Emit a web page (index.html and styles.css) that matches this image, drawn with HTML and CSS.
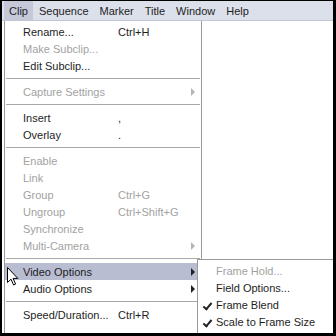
FILE: index.html
```
<!DOCTYPE html>
<html lang="en">

<head>
  <meta charset="UTF-8">
  <title>Clip menu</title>
  <link rel="stylesheet" href="styles.css">
</head>

<body>

  <div class="screen">
    <div class="menubar">
      <span class="bar-item active">Clip</span>
      <span class="bar-item">Sequence</span>
      <span class="bar-item">Marker</span>
      <span class="bar-item">Title</span>
      <span class="bar-item">Window</span>
      <span class="bar-item">Help</span>
    </div>

    <div class="menu">
      <div class="row"><span>Rename...</span><span>Ctrl+H</span></div>
      <div class="row off"><span>Make Subclip...</span></div>
      <div class="row"><span>Edit Subclip...</span></div>
      <div class="sep"></div>
      <div class="row off"><span>Capture Settings</span><span></span><i class="arrow"></i></div>
      <div class="sep"></div>
      <div class="row"><span>Insert</span><span>,</span></div>
      <div class="row"><span>Overlay</span><span>.</span></div>
      <div class="sep"></div>
      <div class="row off"><span>Enable</span></div>
      <div class="row off"><span>Link</span></div>
      <div class="row off"><span>Group</span><span>Ctrl+G</span></div>
      <div class="row off"><span>Ungroup</span><span>Ctrl+Shift+G</span></div>
      <div class="row off"><span>Synchronize</span></div>
      <div class="row off"><span>Multi-Camera</span><span></span><i class="arrow"></i></div>
      <div class="sep"></div>
      <div class="row hover"><span>Video Options</span><span></span><i class="arrow"></i></div>
      <div class="row"><span>Audio Options</span><span></span><i class="arrow"></i></div>
      <div class="sep"></div>
      <div class="row"><span>Speed/Duration...</span><span>Ctrl+R</span></div>
    </div>

    <div class="submenu">
      <div class="sub-row off">Frame Hold...</div>
      <div class="sub-row">Field Options...</div>
      <div class="sub-row checked">Frame Blend</div>
      <div class="sub-row checked">Scale to Frame Size</div>
    </div>

    <svg class="cursor" width="12" height="19" viewBox="0 0 12 19">
      <path d="M0.5 0.5 L0.5 15.5 L4 12.2 L6.6 18 L8.6 17.1 L6.1 11.4 L10.8 11.4 Z" fill="#fff" stroke="#000" stroke-width="1" stroke-linejoin="miter"/>
    </svg>
  </div>

</body>

</html>
```
FILE: styles.css
```
body {
  margin: 0;
  background-color: #fff;
  font-family: "Liberation Sans", Arial, sans-serif;
  font-size: 11px;
  color: #1e1e1e;
}

.screen {
  position: relative;
  width: 336px;
  height: 336px;
  box-sizing: border-box;
  border-style: solid;
  border-color: #000;
  border-width: 1px 3px 3px 2px;
  overflow: hidden;
  background-color: #fff;
}

.menubar {
  display: flex;
  height: 19px;
  padding-left: 2px;
  background-color: #dce0ea;
  border-bottom: 1px solid #c2c6d0;
}

.bar-item {
  display: flex;
  align-items: center;
  padding: 0 5px;
  margin-right: 1px;
  font-size: 11px;
}

.bar-item.active {
  background-color: #c4c8d9;
}

.menu {
  width: 196px;
  height: 320px;
  margin-left: 2px;
  padding-top: 2px;
  border-left: 1px solid #9a9a9a;
  border-right: 1px solid #9a9a9a;
  background-color: #fff;
}

.row {
  display: grid;
  grid-template-columns: 95px 1fr 10px;
  align-items: center;
  height: 17px;
  padding-left: 18px;
}

.row.off {
  color: #a2a2a2;
}

.row.hover {
  background-color: #b9bdd2;
}

.sep {
  height: 9px;
  display: flex;
  align-items: center;
  padding: 0 1px;
}

.sep::before {
  content: "";
  flex: 1;
  border-top: 1px solid #a8a8a8;
}

.arrow {
  width: 0;
  height: 0;
  border-top: 4px solid transparent;
  border-bottom: 4px solid transparent;
  border-left: 4px solid #222;
}

.row.off .arrow {
  border-left-color: #b4b4b4;
}

.submenu {
  position: absolute;
  left: 195px;
  top: 258px;
  right: 0;
  height: 80px;
  padding-top: 3px;
  border-left: 1px solid #9a9a9a;
  border-top: 1px solid #9a9a9a;
  background-color: #fff;
}

.sub-row {
  position: relative;
  height: 17px;
  line-height: 17px;
  padding-left: 18px;
}

.sub-row.off {
  color: #a2a2a2;
}

.sub-row.checked::before {
  content: "";
  position: absolute;
  left: 7px;
  top: 4px;
  width: 3px;
  height: 7px;
  border-right: 2px solid #222;
  border-bottom: 2px solid #222;
  transform: rotate(40deg);
}

.cursor {
  position: absolute;
  left: 5px;
  top: 266px;
}
```
